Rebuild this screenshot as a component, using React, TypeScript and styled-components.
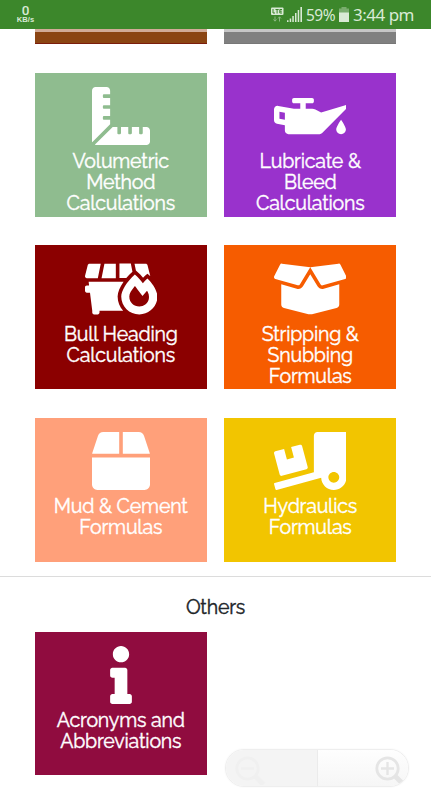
import React from 'react';
import styled, { createGlobalStyle } from 'styled-components';
import {
  FaRulerCombined,
  FaOilCan,
  FaDumpsterFire,
  FaBoxOpen,
  FaBox,
  FaTruckLoading,
  FaInfo,
} from 'react-icons/fa';
import type { IconType } from 'react-icons';

const GlobalStyle = createGlobalStyle`
  *, *::before, *::after { box-sizing: border-box; }
  html, body { margin: 0; background: #fff; }
  body {
    font-family: Raleway, Lato, sans-serif;
    font-variant-ligatures: none;
    overflow: hidden;
  }
`;

const Screen = styled.div`
  position: relative;
  width: 431px;
  height: 800px;
  overflow: hidden;
  background: #fff;
`;

const StatusBar = styled.header`
  display: flex;
  align-items: center;
  justify-content: space-between;
  height: 28.5px;
  padding: 0 14px 0 16px;
  background: #3c872b;
  color: #d9ead5;
`;

const NetSpeed = styled.div`
  display: flex;
  flex-direction: column;
  align-items: center;
  width: 19px;
  padding-top: 1px;
  font-family: Roboto, sans-serif;
  font-weight: 500;
`;

const SpeedValue = styled.span`
  font-size: 13.5px;
  line-height: 11px;
`;

const SpeedUnit = styled.span`
  font-family: 'Liberation Sans', sans-serif;
  font-weight: 700;
  font-size: 7.6px;
  line-height: 8px;
`;

const StatusIcons = styled.div`
  display: flex;
  align-items: center;
  height: 28px;
  padding-top: 1px;
  font-family: 'Noto Sans', sans-serif;
`;

const LteIcon = styled.svg`
  width: 14px;
  height: 16px;
  margin-right: 3px;
`;

const SignalIcon = styled.svg`
  width: 15px;
  height: 15px;
  margin-right: 4px;
`;

const BatteryIcon = styled.svg`
  width: 10px;
  height: 15px;
  margin: 0 4px 0 5px;
`;

const StatusText = styled.span<{ $size: number; $width: number; $tracking: number }>`
  width: ${(p) => p.$width}px;
  font-size: ${(p) => p.$size}px;
  letter-spacing: ${(p) => p.$tracking}px;
  line-height: 28px;
  white-space: nowrap;
`;

const TileGrid = styled.div`
  display: grid;
  grid-template-columns: 172.5px 172.4px;
  column-gap: 17px;
  row-gap: 28.9px;
  padding-left: 34.5px;
`;

const ScrolledRow = styled(TileGrid)`
  height: 15.5px;
`;

const ScrolledTile = styled.div<{ $color: string; $haze: string; $edge: string }>`
  background: ${(p) => p.$color};
  border-top: 3.5px solid ${(p) => p.$haze};
  border-bottom: 1px solid ${(p) => p.$edge};
`;

const Formulas = styled(TileGrid)`
  padding-top: 29px;
`;

const TileCard = styled.a<{ $color: string; $iconWidth: number }>`
  display: flex;
  flex-direction: column;
  align-items: center;
  height: 143.6px;
  padding-top: 14.2px;
  background: ${(p) => p.$color};
  color: #fff;

  svg {
    flex: none;
    width: ${(p) => p.$iconWidth}px;
    height: 58px;
    margin-bottom: 6px;
  }
`;

const Label = styled.span`
  display: block;
  font-size: 19.6px;
  line-height: 21px;
  letter-spacing: -0.22px;
  white-space: nowrap;
  -webkit-text-stroke: 0.4px currentColor;
`;

const Others = styled.section`
  margin-top: 14px;
  border-top: 1px solid #dcdcdc;
`;

const Heading = styled.h2`
  margin: 0;
  padding-top: 20px;
  height: 55px;
  color: #212529;
  text-align: center;
  font-weight: 400;
`;

const ZoomControl = styled.div`
  position: absolute;
  left: 225px;
  top: 749px;
  display: flex;
  width: 184px;
  height: 38px;
  overflow: hidden;
  border: 1px solid #eeeeee;
  border-radius: 19px;
  box-shadow: 0 0 2px #f2f2f2;
`;

const ZoomButton = styled.div<{ $active?: boolean }>`
  display: flex;
  align-items: center;
  flex: none;
  width: ${(p) => (p.$active ? 90 : 92)}px;
  justify-content: ${(p) => (p.$active ? 'flex-end' : 'flex-start')};
  padding: ${(p) => (p.$active ? '1px 0 0 0' : '1px 0 0 8px')};
  background: ${(p) => (p.$active ? 'linear-gradient(#fefefe, #f6f6f6)' : '#f4f4f4')};
  border-right: ${(p) => (p.$active ? '0' : '1px solid #ebebeb')};
  color: ${(p) => (p.$active ? '#e5e5e5' : '#f0f0f0')};
`;

const Lens = styled.svg`
  width: 34px;
  height: 32px;
`;

interface Tile {
  color: string;
  icon: IconType;
  iconWidth: number;
  lines: string[];
}

const tiles: Tile[] = [
  {
    color: '#8fbc8f',
    icon: FaRulerCombined,
    iconWidth: 58,
    lines: ['Volumetric', 'Method', 'Calculations'],
  },
  {
    color: '#9932cc',
    icon: FaOilCan,
    iconWidth: 72.5,
    lines: ['Lubricate &', 'Bleed', 'Calculations'],
  },
  {
    color: '#8b0000',
    icon: FaDumpsterFire,
    iconWidth: 72.5,
    lines: ['Bull Heading', 'Calculations'],
  },
  {
    color: '#f65c00',
    icon: FaBoxOpen,
    iconWidth: 72.5,
    lines: ['Stripping &', 'Snubbing', 'Formulas'],
  },
  {
    color: '#ffa07a',
    icon: FaBox,
    iconWidth: 58,
    lines: ['Mud & Cement', 'Formulas'],
  },
  {
    color: '#f2c500',
    icon: FaTruckLoading,
    iconWidth: 72.5,
    lines: ['Hydraulics', 'Formulas'],
  },
];

const acronyms: Tile = {
  color: '#900c3f',
  icon: FaInfo,
  iconWidth: 22,
  lines: ['Acronyms and', 'Abbreviations'],
};

function FormulaTile({ color, icon: Icon, iconWidth, lines }: Tile) {
  return (
    <TileCard $color={color} $iconWidth={iconWidth}>
      <Icon />
      {lines.map((text) => (
        <Label key={text}>{text}</Label>
      ))}
    </TileCard>
  );
}

function Magnifier({ plus }: { plus?: boolean }) {
  return (
    <Lens viewBox="0 0 34 32" fill="none" stroke="currentColor">
      <circle cx="13.5" cy="15.5" r="10.7" strokeWidth="2.8" />
      <path d="M21.5 23.5l8 8" strokeWidth="5" />
      <path d={plus ? 'M7 15.5h13M13.5 9v13' : 'M7 15.5h13'} strokeWidth="2.4" />
    </Lens>
  );
}

export default function App() {
  return (
    <>
      <GlobalStyle />
      <Screen>
        <StatusBar>
          <NetSpeed>
            <SpeedValue>0</SpeedValue>
            <SpeedUnit>KB/s</SpeedUnit>
          </NetSpeed>
          <StatusIcons>
            <LteIcon viewBox="0 0 14 16">
              <rect x="1" y="0.5" width="12.5" height="7.5" rx="1" fill="#d9ead5" />
              <path d="M3 2v4h2M5.5 2.5h3.2M7.1 2.5V6.5M12 2.5H9.8V6H12M9.8 4.2h2" fill="none" stroke="#3c872b" />
              <path d="M5 9.5v4.5M3.5 12.5l1.5 1.7 1.5-1.7M9.5 14.5V10M8 11.5l1.5-1.7 1.5 1.7" fill="none" stroke="#8dba83" />
            </LteIcon>
            <SignalIcon viewBox="0 0 15 15" fill="#d9ead5">
              <path d="M0 13.3h1.5V15H0zM2.7 11.5h1.5V15H2.7zM5.3 9h1.5v6H5.3zM8 6h1.5v9H8zM10.7 3h1.5v12h-1.5zM13.4 0H15v15h-1.6z" />
            </SignalIcon>
            <StatusText $size={15.5} $width={28} $tracking={-0.5}>
              59%
            </StatusText>
            <BatteryIcon viewBox="0 0 10 15">
              <path d="M2.5 0h5v1.5H10V6H0V1.5h2.5z" fill="#79ad6d" />
              <path d="M0 5.5h10V15H0z" fill="#d9ead5" />
            </BatteryIcon>
            <StatusText $size={17} $width={64} $tracking={-0.5}>
              3:44 pm
            </StatusText>
          </StatusIcons>
        </StatusBar>

        <ScrolledRow>
          <ScrolledTile $color="#8b4513" $haze="#d2ab97" $edge="#7b1d0c" />
          <ScrolledTile $color="#808080" $haze="#c6c6c6" $edge="#777777" />
        </ScrolledRow>

        <Formulas>
          {tiles.map((tile) => (
            <FormulaTile key={tile.color} {...tile} />
          ))}
        </Formulas>

        <Others>
          <Heading>
            <Label>Others</Label>
          </Heading>
          <TileGrid>
            <FormulaTile {...acronyms} />
          </TileGrid>
        </Others>

        <ZoomControl>
          <ZoomButton>
            <Magnifier />
          </ZoomButton>
          <ZoomButton $active>
            <Magnifier plus />
          </ZoomButton>
        </ZoomControl>
      </Screen>
    </>
  );
}
